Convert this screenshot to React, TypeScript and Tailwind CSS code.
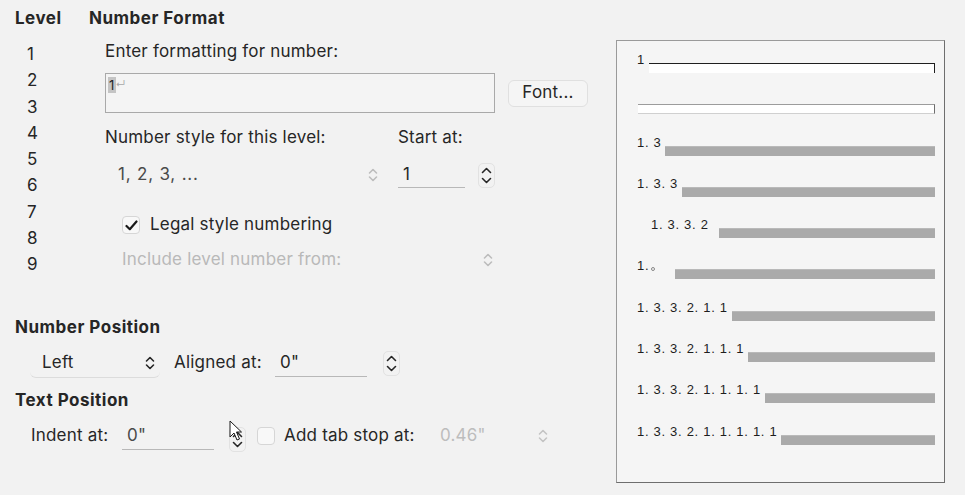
import React from 'react'

const PopupChevron = ({ color = '#262626' }: { color?: string }) => (
  <svg width="10" height="16" viewBox="0 0 10 16" fill="none" stroke={color} strokeWidth="1.6" strokeLinecap="round" strokeLinejoin="round">
    <path d="M1.5 6 L5 2.5 L8.5 6" />
    <path d="M1.5 10 L5 13.5 L8.5 10" />
  </svg>
)

const Stepper = ({ children }: { children?: React.ReactNode }) => (
  <div className="relative w-[17px] h-[25px] rounded-[5px] border border-[#e2e2e2] flex flex-col items-center justify-between py-[3px]">
    <svg width="11" height="7" viewBox="0 0 11 7" fill="none" stroke="#262626" strokeWidth="1.6" strokeLinecap="round" strokeLinejoin="round">
      <path d="M1.5 5.5 L5.5 1.5 L9.5 5.5" />
    </svg>
    <svg width="11" height="7" viewBox="0 0 11 7" fill="none" stroke="#262626" strokeWidth="1.6" strokeLinecap="round" strokeLinejoin="round">
      <path d="M1.5 1.5 L5.5 5.5 L9.5 1.5" />
    </svg>
    {children}
  </div>
)

const Checkbox = ({ checked }: { checked?: boolean }) => (
  <div className="w-[18px] h-[18px] rounded-[4px] border border-[#d6d6d6] bg-[#f8f8f8] flex items-center justify-center">
    {checked && (
      <svg width="13" height="11" viewBox="0 0 13 11" fill="none" stroke="#1a1a1a" strokeWidth="2.2" strokeLinecap="round" strokeLinejoin="round">
        <path d="M1.5 6 L4.8 9.2 L11.5 1.5" />
      </svg>
    )}
  </div>
)

const PreviewRow = ({ label, bar, indent = 0, kind = 'gray', dot = false }: { label: string, bar: number, indent?: number, kind?: 'gray' | 'first' | 'blank', dot?: boolean }) => {
  let barClass = 'self-end h-[10px] bg-[#aaaaaa] border-t border-[#b9b9b9]'
  if (kind === 'first') barClass = 'self-end h-[10px] bg-white border-t border-r border-[#1f1f1f]'
  if (kind === 'blank') barClass = 'self-end h-[10px] bg-white border-t border-r border-b border-t-[#9c9c9c] border-r-[#6e6e6e] border-b-[#d0d0d0]'
  return (
    <div className="h-[20px] flex justify-between">
      <span className="self-start leading-[14px] text-[13px] tracking-[0.7px] text-[#1e1e1e] whitespace-nowrap flex items-end" style={{ paddingLeft: indent }}>
        {label}
        {dot && <span className="ml-[2px] mb-[2px] w-[4px] h-[4px] rounded-full border border-[#888]" />}
      </span>
      <div className={barClass} style={{ width: bar }} />
    </div>
  )
}

export default function App () {
  const levels = ['1', '2', '3', '4', '5', '6', '7', '8', '9']

  return (
    <div className="w-[965px] h-[495px] bg-[#f2f2f2] flex font-['Inter',sans-serif] text-[#262626] text-[17px] tracking-[0.2px] overflow-hidden">
      <div className="w-[616px] flex flex-col">
        <div className="flex h-[277px]">
          {/* level column */}
          <div className="w-[89px] pl-[15px]">
            <div className="h-[36px] leading-[36px] font-bold tracking-[0.5px]">Level</div>
            <div className="pt-[5px] pl-[12px]">
              {levels.map(l => (
                <div key={l} className="h-[26.25px] leading-[26.25px]">{l}</div>
              ))}
            </div>
          </div>

          {/* number format column */}
          <div className="flex-1">
            <div className="h-[36px] leading-[36px] font-bold tracking-[0.5px]">Number Format</div>
            <div className="pl-[16px]">
              <div className="mt-[4px] h-[22px] leading-[22px]">Enter formatting for number:</div>
              <div className="mt-[11px] flex items-center gap-[13px]">
                <div className="w-[390px] h-[40px] border border-[#a9a9a9] bg-[#f4f4f4] pl-[2px] pt-[3px]">
                  <div className="flex items-start text-[13px] leading-[16px]">
                    <span className="bg-[#c4c4c4] px-[1px]">1</span>
                    <span className="text-[10px] text-[#a8a8a8] leading-[14px]">↵</span>
                  </div>
                </div>
                <div className="w-[80px] h-[27px] rounded-[6px] border border-[#e0e0e0] bg-[#f5f5f5] flex items-center justify-center">
                  Font...
                </div>
              </div>
              <div className="mt-[13px] h-[22px] leading-[22px] flex">
                <span className="w-[293px]">Number style for this level:</span>
                <span>Start at:</span>
              </div>
              <div className="mt-[14px] h-[26px] flex items-center">
                <div className="w-[280px] pl-[13px] pr-[7px] flex items-center justify-between">
                  <span className="text-[#4a4a4a] tracking-[0.8px]">1, 2, 3, ...</span>
                  <PopupChevron color="#bdbdbd" />
                </div>
                <div className="ml-[13px] w-[67px] h-[26px] border-b border-[#b8b8b8] pl-[5px] leading-[24px]">1</div>
                <div className="ml-[13px]"><Stepper /></div>
              </div>
              <div className="mt-[26px] h-[22px] pl-[17px] flex items-center gap-[10px]">
                <Checkbox checked />
                <span>Legal style numbering</span>
              </div>
              <div className="mt-[13px] h-[22px] pl-[17px] w-[390px] pr-[2px] flex items-center justify-between text-[#b9b9b9]">
                <span>Include level number from:</span>
                <PopupChevron color="#bdbdbd" />
              </div>
            </div>
          </div>
        </div>

        {/* number position */}
        <div className="mt-[39px] pl-[15px] h-[22px] leading-[22px] font-bold tracking-[0.5px]">Number Position</div>
        <div className="mt-[9px] h-[32px] pl-[30px] flex items-center">
          <div className="w-[130px] h-[30px] rounded-[6px] border-b border-[#dcdcdc] pl-[12px] pr-[5px] flex items-center justify-between">
            <span>Left</span>
            <PopupChevron />
          </div>
          <span className="ml-[14px] w-[101px]">Aligned at:</span>
          <div className="w-[92px] h-[28px] border-b border-[#b8b8b8] pl-[5px] leading-[26px]">0"</div>
          <div className="ml-[16px]"><Stepper /></div>
        </div>

        {/* text position */}
        <div className="mt-[10px] pl-[15px] h-[22px] leading-[22px] font-bold tracking-[0.5px]">Text Position</div>
        <div className="mt-[9px] h-[32px] pl-[31px] flex items-center">
          <span className="w-[91px]">Indent at:</span>
          <div className="w-[92px] h-[28px] border-b border-[#b8b8b8] pl-[5px] leading-[26px] text-[#4a4a4a]">0"</div>
          <div className="ml-[15px] mt-[6px]">
            <Stepper>
              <svg className="absolute left-[-1px] top-[-8px]" width="14" height="22" viewBox="0 0 14 22">
                <path d="M1 1 L1 17 L5 13 L8 20 L10.5 19 L7.5 12 L12.5 12 Z" fill="#ffffff" stroke="#1a1a1a" strokeWidth="1" strokeLinejoin="round" />
              </svg>
            </Stepper>
          </div>
          <div className="ml-[11px]"><Checkbox /></div>
          <span className="ml-[9px] w-[151px]">Add tab stop at:</span>
          <span className="pl-[5px] w-[103px] text-[#bdbdbd]">0.46"</span>
          <PopupChevron color="#c4c4c4" />
        </div>
      </div>

      {/* preview */}
      <div className="mt-[40px] w-[329px] h-[443px] border border-[#9a9a9a] border-r-[#6e6e6e] border-b-[#6e6e6e] bg-[#f5f5f5] pt-[12px] pl-[20px] pr-[9px] flex flex-col gap-[21.3px] font-['Liberation_Sans',sans-serif]">
        <PreviewRow label="1" bar={286} kind="first" />
        <PreviewRow label="" bar={297} kind="blank" />
        <PreviewRow label="1. 3" bar={270} />
        <PreviewRow label="1. 3. 3" bar={253} />
        <PreviewRow label="1. 3. 3. 2" bar={216} indent={14} />
        <PreviewRow label="1." bar={260} dot />
        <PreviewRow label="1. 3. 3. 2. 1. 1" bar={203} />
        <PreviewRow label="1. 3. 3. 2. 1. 1. 1" bar={187} />
        <PreviewRow label="1. 3. 3. 2. 1. 1. 1. 1" bar={170} />
        <PreviewRow label="1. 3. 3. 2. 1. 1. 1. 1. 1" bar={154} />
      </div>
    </div>
  )
}
